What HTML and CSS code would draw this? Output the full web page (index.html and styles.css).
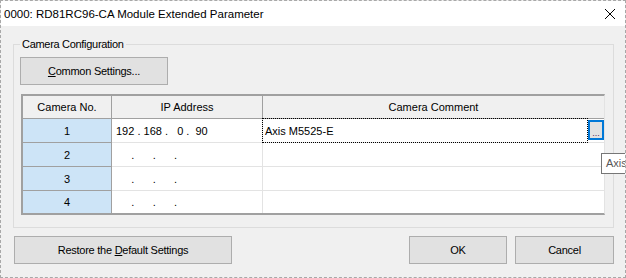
FILE: index.html
```html
<!DOCTYPE html>
<html lang="en">
  <head>
    <meta charset="UTF-8" />
    <meta name="viewport" content="width=device-width, initial-scale=1.0" />
    <title>RD81RC96-CA Module Extended Parameter</title>
    <link rel="stylesheet" href="styles.css">
  </head>
  <body>
    <div class="window">
      <div class="titlebar">
        <span class="title">0000: RD81RC96-CA Module Extended Parameter</span>
        <svg class="close" width="10" height="10" viewBox="0 0 10 10">
          <path d="M0 0 L10 10 M10 0 L0 10" stroke="#000" stroke-width="1" />
        </svg>
      </div>

      <div class="content">
        <fieldset class="group">
          <legend>Camera Configuration</legend>
          <button class="btn btn-common"><u>C</u>ommon Settings...</button>

          <div class="grid">
            <div class="cell hd">Camera No.</div>
            <div class="cell hd">IP Address</div>
            <div class="cell hd last">Camera Comment</div>

            <div class="cell no">1</div>
            <div class="cell ip">192 . 168 .   0 .  90</div>
            <div class="cell cm focus">
              <div class="edit">Axis M5525-E</div>
              <div class="more">...</div>
            </div>

            <div class="cell no">2</div>
            <div class="cell ip">     .      .      .</div>
            <div class="cell cm"></div>

            <div class="cell no">3</div>
            <div class="cell ip">     .      .      .</div>
            <div class="cell cm"></div>

            <div class="cell no end">4</div>
            <div class="cell ip end">     .      .      .</div>
            <div class="cell cm end"></div>
          </div>
        </fieldset>

        <div class="actions">
          <button class="btn btn-restore">Restore the <u>D</u>efault Settings</button>
          <div class="actions-right">
            <button class="btn btn-ok">OK</button>
            <button class="btn btn-cancel">Cancel</button>
          </div>
        </div>
      </div>

      <!-- tooltip is cut off by the window edge -->
      <div class="tooltip">Axis</div>
    </div>
  </body>
</html>
```

FILE: styles.css
```css
html,
body {
  margin: 0;
  padding: 0;
  overflow: hidden;
  background: #f0f0f0;
}

body {
  font-family: "Liberation Sans", Arial, sans-serif;
  font-size: 11px;
  color: #000;
}

.window {
  position: relative;
  box-sizing: border-box;
  width: 626px;
  height: 278px;
  border: 1px dashed #a8a8a8;
  background: #f0f0f0;
}

.titlebar {
  height: 25px;
  background: #fff;
  display: flex;
  align-items: center;
  justify-content: space-between;
  padding-left: 3px;
}

.title {
  font-size: 11.5px;
}

.close {
  margin-right: 10px;
}

.content {
  padding-top: 11px;
}

/* group box */
.group {
  box-sizing: border-box;
  width: 601px;
  margin: 0 0 0 12px;
  padding: 6px 6px 12px 6px;
  border: 1px solid #dcdcdc;
}

.group legend {
  padding: 0 2px;
  line-height: 14px;
  letter-spacing: -0.3px;
}

.btn {
  box-sizing: border-box;
  height: 28px;
  background: #e1e1e1;
  border: 1px solid #adadad;
  font-family: "Liberation Sans", Arial, sans-serif;
  font-size: 11px;
  letter-spacing: -0.25px;
  color: #000;
  padding: 0;
  display: block;
}

.btn-common {
  width: 148px;
}

/* camera grid */
.grid {
  box-sizing: border-box;
  width: 584px;
  margin: 9px 0 0 1px;
  display: grid;
  grid-template-columns: 89px 151px 341px;
  grid-template-rows: 23px 24px 24px 24px 22px;
  border-left: 2px solid #a0a0a0;
  border-top: 2px solid #a0a0a0;
  border-bottom: 2px solid #a0a0a0;
  border-right: 1px solid #e3e3e3;
  background: #fff;
}

.cell {
  box-sizing: border-box;
  display: flex;
  align-items: center;
  white-space: pre;
}

.hd {
  background: #f0f0f0;
  justify-content: center;
  border-right: 1px solid #a0a0a0;
  border-bottom: 1px solid #a0a0a0;
}

.hd.last {
  border-right: none;
}

.no {
  background: #cde4f7;
  justify-content: center;
  border-right: 1px solid #a0a0a0;
  border-bottom: 1px solid #a0a0a0;
}

.ip {
  padding-left: 4px;
  border-right: 1px solid #e3e3e3;
  border-bottom: 1px solid #e3e3e3;
}

.cm {
  border-bottom: 1px solid #e3e3e3;
}

.end {
  border-bottom: none;
}

.focus {
  align-items: stretch;
}

.edit {
  flex: 1;
  display: flex;
  align-items: center;
  padding-left: 2px;
  outline: 1px dotted #000;
}

.more {
  box-sizing: border-box;
  width: 16px;
  height: 20px;
  margin: 1px 0 0 1px;
  border: 2px solid #0078d7;
  background: #e1e1e1;
  font-size: 9px;
  line-height: 22px;
  text-align: center;
  color: #4a2a5a;
  overflow: hidden;
}

/* bottom buttons */
.actions {
  display: flex;
  justify-content: space-between;
  margin: 8px 11px 0 13px;
}

.btn-restore {
  width: 218px;
}

.actions-right {
  display: flex;
  gap: 8px;
}

.btn-ok {
  width: 98px;
}

.btn-cancel {
  width: 99px;
}

.tooltip {
  position: absolute;
  left: 600px;
  top: 152px;
  box-sizing: border-box;
  width: 24px;
  height: 21px;
  padding-left: 4px;
  border: 1px solid #767676;
  border-right: none;
  background: #fff;
  color: #575757;
  line-height: 19px;
  white-space: nowrap;
  overflow: hidden;
}
```
